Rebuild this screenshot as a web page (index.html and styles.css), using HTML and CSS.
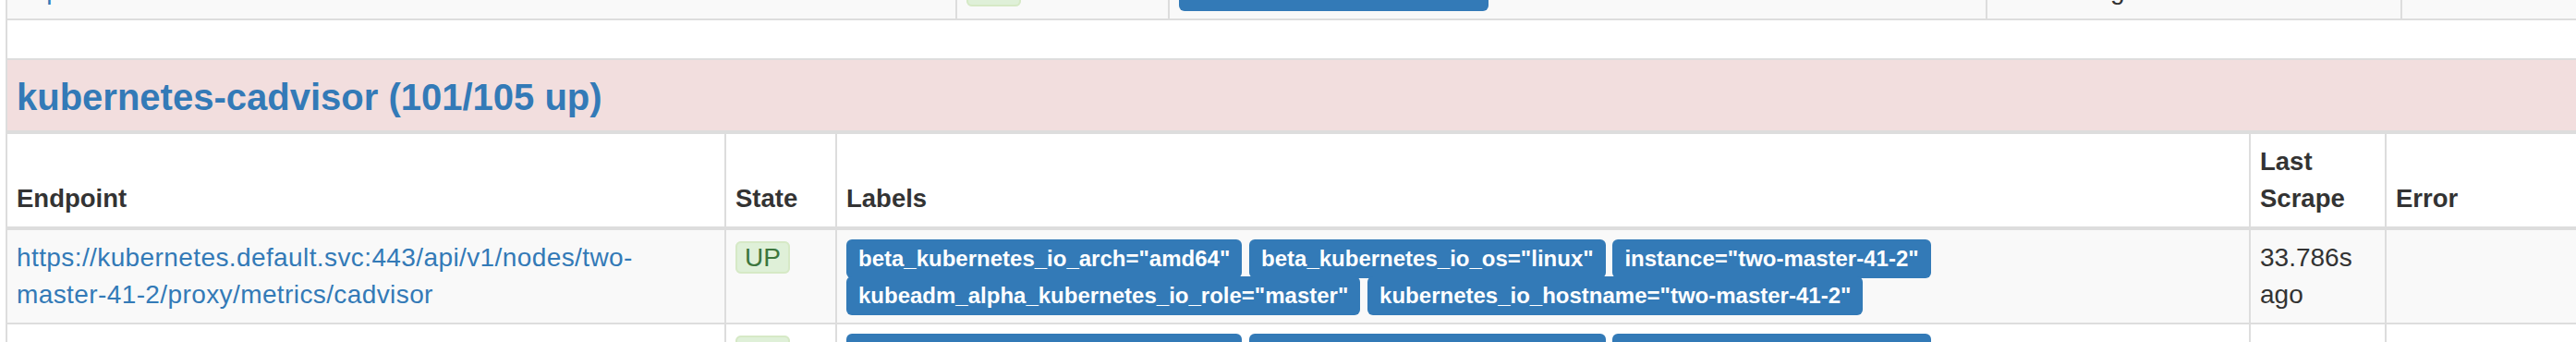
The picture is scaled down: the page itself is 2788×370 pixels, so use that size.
FILE: index.html
```html
<!DOCTYPE html>
<html lang="en">

<head>
    <meta charset="UTF-8" />
    <title>Prometheus Targets</title>
    <link rel="stylesheet" href="styles.css">
</head>

<body>
    <div class="container">
        <!-- tail of the previous job, scrolled mostly out of view -->
        <div class="scrolled">
            <table class="table table-prev">
                <colgroup>
                    <col style="width: 1028px">
                    <col style="width: 230px">
                    <col style="width: 885px">
                    <col style="width: 449px">
                    <col style="width: 483px">
                </colgroup>
                <tbody>
                    <tr>
                        <td class="endpoint"><a href="#">https://10.0.41.12:6443/metrics</a></td>
                        <td><span class="state state-up">UP</span></td>
                        <td class="labels"><span class="label">instance="10.0.41.12:6443"</span></td>
                        <td>12.345s ago</td>
                        <td></td>
                    </tr>
                </tbody>
            </table>
        </div>

        <table class="table">
            <colgroup>
                <col style="width: 778px">
                <col style="width: 120px">
                <col style="width: 1530px">
                <col style="width: 147px">
                <col style="width: 500px">
            </colgroup>
            <thead>
                <tr class="spacer">
                    <td colspan="5"></td>
                </tr>
                <tr class="job-header danger">
                    <th colspan="5">
                        <h2><a href="#job-kubernetes-cadvisor" id="job-kubernetes-cadvisor">kubernetes-cadvisor (101/105 up)</a></h2>
                    </th>
                </tr>
                <tr class="job-details">
                    <th>Endpoint</th>
                    <th>State</th>
                    <th>Labels</th>
                    <th>Last Scrape</th>
                    <th>Error</th>
                </tr>
            </thead>
            <tbody>
                <tr>
                    <td class="endpoint"><a href="#">https://kubernetes.default.svc:443/api/v1/nodes/two-master-41-2/proxy/metrics/cadvisor</a></td>
                    <td><span class="state state-up">UP</span></td>
                    <td class="labels">
                        <span class="label">beta_kubernetes_io_arch="amd64"</span>
                        <span class="label">beta_kubernetes_io_os="linux"</span>
                        <span class="label">instance="two-master-41-2"</span>
                        <span class="label">kubeadm_alpha_kubernetes_io_role="master"</span>
                        <span class="label">kubernetes_io_hostname="two-master-41-2"</span>
                    </td>
                    <td>33.786s ago</td>
                    <td></td>
                </tr>
                <tr>
                    <td class="endpoint"><a href="#">https://kubernetes.default.svc:443/api/v1/nodes/two-master-41-3/proxy/metrics/cadvisor</a></td>
                    <td><span class="state state-up">UP</span></td>
                    <td class="labels">
                        <span class="label">beta_kubernetes_io_arch="amd64"</span>
                        <span class="label">beta_kubernetes_io_os="linux"</span>
                        <span class="label">instance="two-master-41-3"</span>
                        <span class="label">kubeadm_alpha_kubernetes_io_role="master"</span>
                        <span class="label">kubernetes_io_hostname="two-master-41-3"</span>
                    </td>
                    <td>12.917s ago</td>
                    <td></td>
                </tr>
            </tbody>
        </table>
    </div>
</body>

</html>
```

FILE: styles.css
```css
/* Base */
* {
    box-sizing: border-box;
}

html,
body {
    margin: 0;
    overflow: hidden;
}

body {
    font-family: 'Liberation Sans', Arial, sans-serif;
    font-size: 28px;
    line-height: 40px;
    color: #333;
    background-color: #fff;
}

a {
    color: #337ab7;
    text-decoration: none;
}

.container {
    padding-left: 6px;
}

.scrolled {
    margin-top: -42px;
}

/* Tables */
.table {
    border-collapse: collapse;
    table-layout: fixed;
    width: 3075px;
}

.table th,
.table td {
    padding: 10px;
    border: 2px solid #ddd;
    text-align: left;
    vertical-align: top;
}

.table tbody tr:nth-child(odd) td {
    background-color: #f9f9f9;
}

.spacer td {
    height: 42px;
    padding: 0;
    border-top: 0;
}

.job-header th {
    background-color: #f2dede;
    padding: 10px;
    border-bottom-width: 4px;
}

.job-header h2 {
    margin: 8px 0 4px;
    font-size: 40px;
    line-height: 44px;
}

.job-details th {
    font-size: 27.5px;
    vertical-align: bottom;
    border-bottom-width: 4px;
}

.endpoint a {
    letter-spacing: 0.4px;
}

/* Badges */
.state {
    padding: 0 8px;
    border: 2px solid #d6e9c6;
    border-radius: 6px;
}

.state-up {
    background-color: #dff0d8;
    color: #3c763d;
}

.label {
    padding: 7px 13px 8px;
    font-size: 24px;
    font-weight: bold;
    line-height: 1;
    color: #fff;
    background-color: #337ab7;
    border-radius: 6px;
    white-space: nowrap;
}
```
